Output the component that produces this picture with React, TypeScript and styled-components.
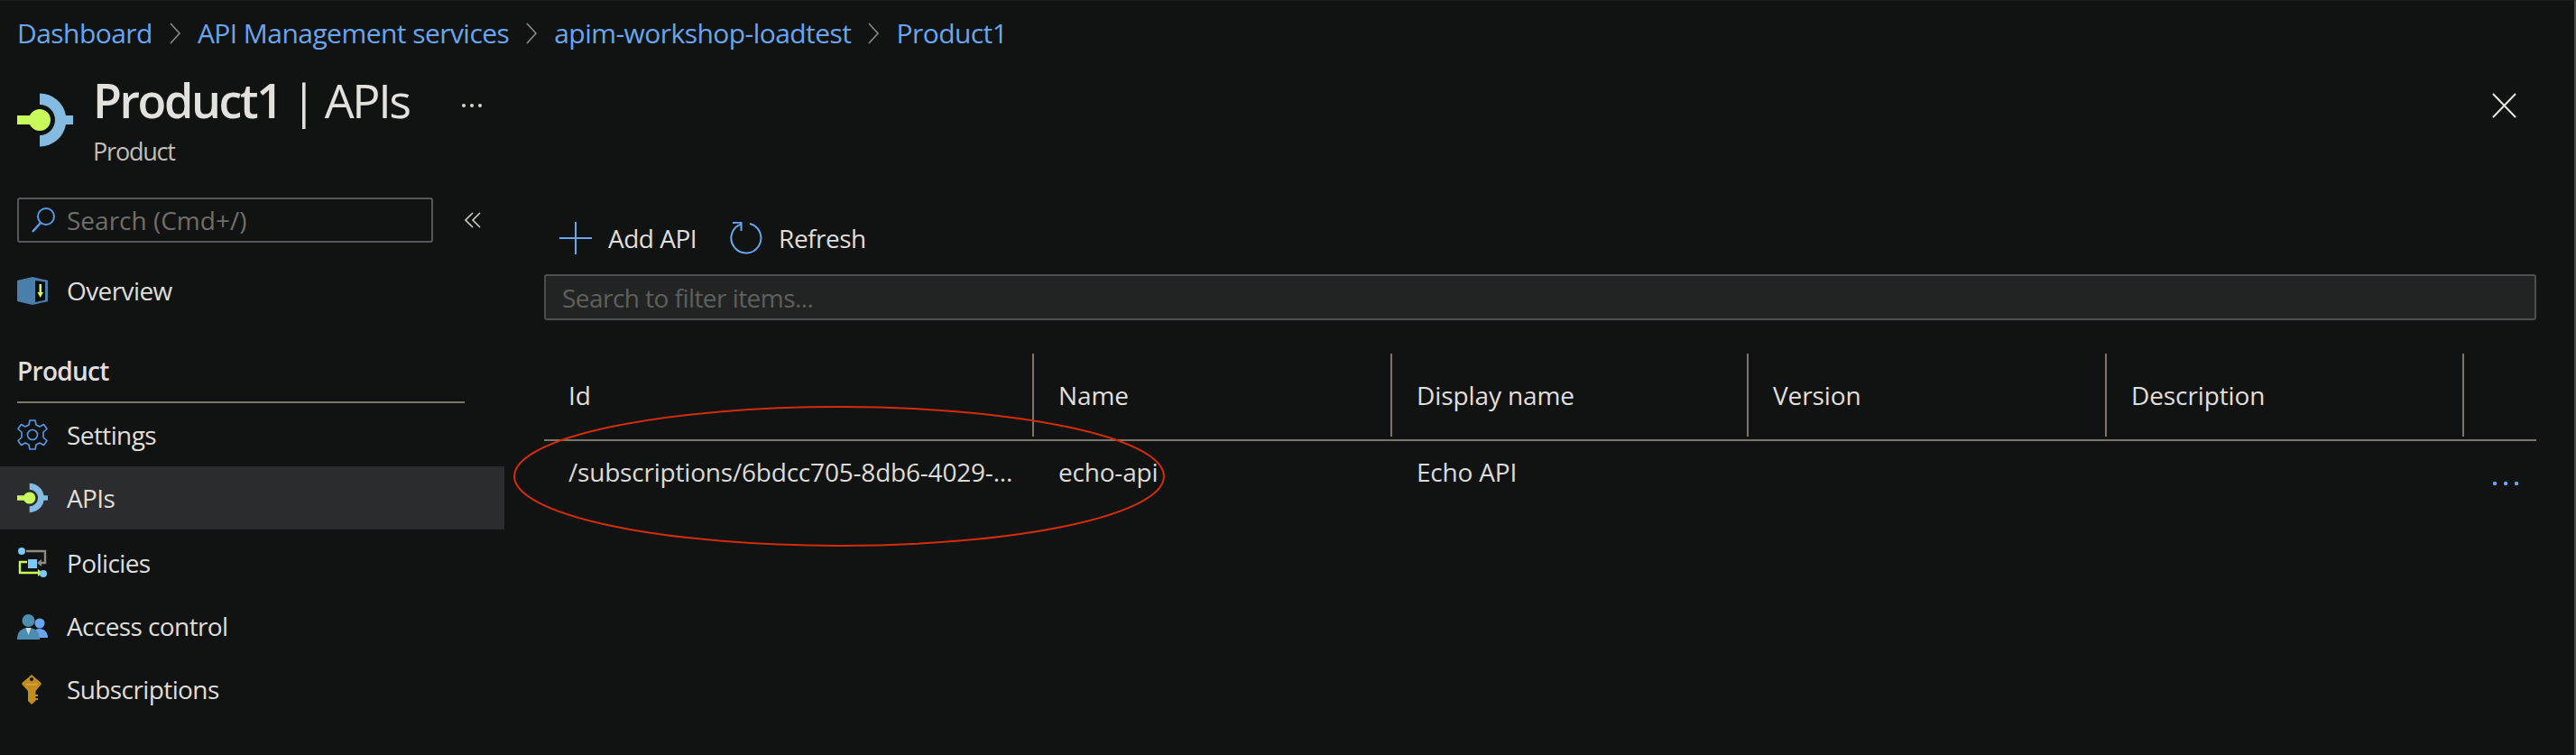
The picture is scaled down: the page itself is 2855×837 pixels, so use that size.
import React from "react";
import styled, { createGlobalStyle } from "styled-components";

const Global = createGlobalStyle`
  html, body { margin: 0; padding: 0; background: #111313; }
  * { box-sizing: border-box; }
`;

const FONT = `"Open Sans", "Noto Sans", "Liberation Sans", sans-serif`;

const Page = styled.div`
  position: relative;
  width: 2855px;
  height: 837px;
  overflow: hidden;
  background: #111313;
  color: #e0dfdc;
  font-family: ${FONT};
  border-right: 2px solid #4a4c4c;
  border-top: 1px solid #1c1e1e;
`;

const Breadcrumbs = styled.nav`
  display: flex;
  align-items: center;
  height: 60px;
  padding: 11px 0 0 19px;
  font-size: 30px;
  letter-spacing: -0.55px;
  color: #69a5f0;
`;

const Crumb = styled.span`
  white-space: nowrap;
`;

const CrumbSep = styled.svg`
  width: 14px;
  height: 24px;
  margin: 0 18px 0 18px;
  fill: none;
  stroke: #8a8a86;
  stroke-width: 1.6;
`;

const TitleBar = styled.header`
  display: flex;
  align-items: flex-start;
  height: 158px;
  padding: 15px 66px 0 19px;
`;

const TitleIcon = styled.svg`
  width: 62px;
  height: 60px;
  margin-top: 27px;
  flex: none;
`;

const TitleText = styled.div`
  display: flex;
  flex-direction: column;
  margin-left: 22px;
`;

const Title = styled.h1`
  margin: 0;
  font-size: 52px;
  line-height: 70px;
  font-weight: 400;
  letter-spacing: -2.4px;
  white-space: nowrap;
  color: #e2e1de;
`;

const TitleStrong = styled.span`
  font-weight: 600;
`;

const Subtitle = styled.div`
  font-size: 27px;
  line-height: 34px;
  margin-top: 5px;
  letter-spacing: -1.2px;
  color: #c2beb8;
`;

const More = styled.svg`
  width: 24px;
  height: 6px;
  margin: 38px 0 0 57px;
  fill: #d8d6d2;
`;

const Close = styled.svg`
  width: 27px;
  height: 28px;
  margin-left: auto;
  margin-top: 27px;
  margin-right: -2px;
  stroke: #e6e5e2;
  stroke-width: 2;
  fill: none;
`;

const Body = styled.div`
  display: flex;
`;

const Sidebar = styled.aside`
  width: 559px;
  flex: none;
`;

const SearchRow = styled.div`
  display: flex;
  align-items: center;
  padding-left: 19px;
  height: 50px;
`;

const SideSearch = styled.div`
  display: flex;
  align-items: center;
  width: 461px;
  height: 50px;
  padding-left: 13px;
  border: 2px solid #55575a;
  border-radius: 3px;
  font-size: 28px;
  color: #6f6e6a;
  white-space: nowrap;
`;

const SearchGlyph = styled.svg`
  width: 28px;
  height: 30px;
  margin-right: 12px;
  fill: none;
  stroke: #5b97e6;
  stroke-width: 2;
`;

const Collapse = styled.svg`
  width: 18px;
  height: 18px;
  margin-left: 35px;
  fill: none;
  stroke: #cfcdc9;
  stroke-width: 1.6;
`;

const NavRow = styled.div<{ $active?: boolean }>`
  display: flex;
  align-items: center;
  height: 70px;
  padding-left: 19px;
  margin-bottom: ${(p) => (p.$active ? "2px" : "0")};
  font-size: 28px;
  letter-spacing: -0.6px;
  background: ${(p) => (p.$active ? "#2b2c30" : "transparent")};
  color: #dfdedb;
`;

const NavIcon = styled.svg`
  width: 34px;
  height: 36px;
  flex: none;
  margin-right: 21px;
`;

const OverviewRow = styled(NavRow)`
  margin-top: 18px;
`;

const SectionHead = styled.div`
  margin: 19px 44px 0 19px;
  height: 71px;
  display: flex;
  align-items: center;
  font-size: 28px;
  font-weight: 600;
  letter-spacing: -0.7px;
  border-bottom: 2px solid #7c766b;
`;

const Content = styled.main`
  flex: 1;
  padding: 0 42px 0 44px;
`;

const Toolbar = styled.div`
  display: flex;
  align-items: center;
  height: 40px;
  margin-top: 25px;
  padding-left: 17px;
`;

const ToolButton = styled.div`
  display: flex;
  align-items: center;
  font-size: 28px;
  letter-spacing: -0.5px;
  margin-right: 37px;
  color: #dfdedb;
  white-space: nowrap;
`;

const ToolIcon = styled.svg`
  width: 36px;
  height: 36px;
  margin-right: 18px;
  fill: none;
  stroke: #69a5f0;
  stroke-width: 2;
`;

const FilterBox = styled.div`
  display: flex;
  align-items: center;
  height: 51px;
  margin-top: 20px;
  padding-left: 18px;
  background: #222424;
  border: 2px solid #4c4d50;
  border-radius: 3px;
  font-size: 28px;
  letter-spacing: -0.55px;
  color: #5f5f5c;
`;

const Grid = styled.div`
  display: grid;
  grid-template-columns: 543px 397px 395px 397px 396px 80px;
`;

const HeaderCell = styled.div<{ $sep?: boolean }>`
  height: 92px;
  display: flex;
  align-items: center;
  padding: 0 0 0 27px;
  margin-top: 37px;
  margin-bottom: 3px;
  font-size: 28px;
  letter-spacing: -0.1px;
  font-weight: 500;
  color: #e0dfdc;
  border-right: ${(p) => (p.$sep ? "2px solid #7c766b" : "none")};
`;

const HeaderRule = styled.div`
  grid-column: 1 / -1;
  height: 2px;
  background: #7c766b;
`;

const Cell = styled.div`
  height: 68px;
  display: flex;
  align-items: center;
  padding-left: 27px;
  font-size: 28px;
  letter-spacing: -0.2px;
  color: #dcdbd8;
  white-space: nowrap;
`;

const ActionCell = styled.div`
  height: 72px;
  display: flex;
  align-items: center;
  justify-content: flex-end;
  padding: 22px 19px 0 0;
`;

const Dots = styled.svg`
  width: 30px;
  height: 6px;
  fill: #69a5f0;
`;

const Annotation = styled.svg`
  position: absolute;
  left: 560px;
  top: 440px;
  width: 740px;
  height: 176px;
  fill: none;
  stroke: #d42c08;
  stroke-width: 2;
`;

const ApiGlyph = () => (
  <>
    <path d="M25 0.5 A29.5 29.5 0 0 1 54 25 H62 V35 H54 A29.5 29.5 0 0 1 25 59.5 V47 A17 17 0 0 0 25 13 Z" fill="#85bbe0" />
    <rect x="0" y="25" width="18" height="10" fill="#c8fb5c" />
    <circle cx="25" cy="30" r="12" fill="#c8fb5c" />
  </>
);

const ChevronSep = () => (
  <CrumbSep viewBox="0 0 14 24">
    <path d="M2 1 L12 12 L2 23" />
  </CrumbSep>
);

export default function App() {
  return (
    <Page>
      <Global />
      <Breadcrumbs>
        <Crumb>Dashboard</Crumb>
        <ChevronSep />
        <Crumb>API Management services</Crumb>
        <ChevronSep />
        <Crumb>apim-workshop-loadtest</Crumb>
        <ChevronSep />
        <Crumb>Product1</Crumb>
      </Breadcrumbs>
      <TitleBar>
        <TitleIcon viewBox="0 0 62 60">
          <ApiGlyph />
        </TitleIcon>
        <TitleText>
          <Title>
            <TitleStrong>Product1</TitleStrong> | APIs
          </Title>
          <Subtitle>Product</Subtitle>
        </TitleText>
        <More viewBox="0 0 24 6">
          <circle cx="3" cy="3" r="2" />
          <circle cx="12" cy="3" r="2" />
          <circle cx="21" cy="3" r="2" />
        </More>
        <Close viewBox="0 0 27 28">
          <path d="M1 1 L26 27 M26 1 L1 27" />
        </Close>
      </TitleBar>
      <Body>
        <Sidebar>
          <SearchRow>
            <SideSearch>
              <SearchGlyph viewBox="0 0 28 30">
                <circle cx="17" cy="11" r="9" />
                <path d="M11 18 L2 28" strokeWidth="2.6" />
              </SearchGlyph>
              Search (Cmd+/)
            </SideSearch>
            <Collapse viewBox="0 0 18 18">
              <path d="M9 1 L1 9 L9 17 M17 1 L9 9 L17 17" />
            </Collapse>
          </SearchRow>
          <OverviewRow>
            <NavIcon viewBox="0 0 34 36">
              <path d="M0 7 L17 3 L34 7 V30 L17 34 L0 30 Z" fill="#4a7fab" />
              <path d="M20 7 L34 9 V28 L20 31 Z" fill="#0a0c0c" />
              <path d="M34 7 V30 L31 30.7 V6.3 Z" fill="#4a7fab" />
              <path d="M24.5 11 H27 V20 H29 L25.7 26 L22.5 20 H24.5 Z" fill="#c8fb5c" />
            </NavIcon>
            Overview
          </OverviewRow>
          <SectionHead>Product</SectionHead>
          <NavRow>
            <NavIcon viewBox="0 0 34 36" fill="none" stroke="#5b97e6" strokeWidth="1.6">
              <path d="M14 2 H20 L21 7 L25 9 L29.5 6.5 L33 11.5 L29 15 V21 L33 24.5 L29.5 29.5 L25 27 L21 29 L20 34 H14 L13 29 L9 27 L4.5 29.5 L1 24.5 L5 21 V15 L1 11.5 L4.5 6.5 L9 9 L13 7 Z" strokeLinejoin="round" />
              <circle cx="17" cy="18" r="5.5" />
            </NavIcon>
            Settings
          </NavRow>
          <NavRow $active>
            <NavIcon viewBox="0 0 62 60">
              <ApiGlyph />
            </NavIcon>
            APIs
          </NavRow>
          <NavRow>
            <NavIcon viewBox="0 0 34 36">
              <circle cx="5" cy="5" r="4" fill="#7cc8f7" />
              <path d="M10 5 H31 V18 H24" fill="none" stroke="#8f8a84" strokeWidth="2.4" />
              <path d="M27 14 L22 18 L27 22 Z" fill="#8f8a84" />
              <rect x="12" y="14" width="10" height="10" fill="#7cc8f7" />
              <path d="M11 17 H3 V29 H25" fill="none" stroke="#c8fb5c" strokeWidth="2.4" />
              <path d="M23 25 L28 29 L23 33 Z" fill="#c8fb5c" />
              <circle cx="29" cy="30" r="4" fill="#7cc8f7" />
            </NavIcon>
            Policies
          </NavRow>
          <NavRow>
            <NavIcon viewBox="0 0 34 36">
              <circle cx="25" cy="15" r="5.5" fill="#69a5f0" />
              <path d="M17 31 C17 24 20 21 25 21 C30 21 34 25 34 31 Z" fill="#69a5f0" />
              <circle cx="12.5" cy="12" r="7" fill="#4d8db0" />
              <path d="M0 33 C0 25 4 20 12.5 20 C21 20 25 25 25 33 Z" fill="#4d8db0" />
              <path d="M9.5 20 H15.5 L12.5 28 Z" fill="#d6dadc" />
            </NavIcon>
            Access control
          </NavRow>
          <NavRow>
            <NavIcon viewBox="0 0 34 36">
              <path d="M16 2 L26 10.5 Q27.5 12 26 13.5 L20.5 20 V31 L16 35 L12 31 V20 L6 13.5 Q4.5 12 6 10.5 Z" fill="#c08d1e" />
              <circle cx="16" cy="7" r="2" fill="#111313" />
              <rect x="10" y="12" width="12" height="1.5" fill="#dca83a" />
              <rect x="20" y="24" width="3" height="2" fill="#c08d1e" />
              <rect x="20" y="28" width="3" height="2" fill="#c08d1e" />
            </NavIcon>
            Subscriptions
          </NavRow>
        </Sidebar>
        <Content>
          <Toolbar>
            <ToolButton>
              <ToolIcon viewBox="0 0 36 36">
                <path d="M18 0 V36 M0 18 H36" />
              </ToolIcon>
              Add API
            </ToolButton>
            <ToolButton>
              <ToolIcon viewBox="0 0 36 36">
                <path d="M12.5 2.4 A16.5 16.5 0 1 0 22 2" />
                <path d="M3 1 L12.5 0.6 V10" />
              </ToolIcon>
              Refresh
            </ToolButton>
          </Toolbar>
          <FilterBox>Search to filter items...</FilterBox>
          <Grid>
            <HeaderCell $sep>Id</HeaderCell>
            <HeaderCell $sep>Name</HeaderCell>
            <HeaderCell $sep>Display name</HeaderCell>
            <HeaderCell $sep>Version</HeaderCell>
            <HeaderCell $sep>Description</HeaderCell>
            <HeaderCell />
            <HeaderRule />
            <Cell>/subscriptions/6bdcc705-8db6-4029-...</Cell>
            <Cell>echo-api</Cell>
            <Cell>Echo API</Cell>
            <Cell />
            <Cell />
            <ActionCell>
              <Dots viewBox="0 0 30 6">
                <circle cx="3" cy="3" r="2.2" />
                <circle cx="15" cy="3" r="2.2" />
                <circle cx="27" cy="3" r="2.2" />
              </Dots>
            </ActionCell>
          </Grid>
        </Content>
      </Body>
      <Annotation viewBox="0 0 740 176">
        <ellipse cx="370" cy="87" rx="360" ry="77" />
      </Annotation>
    </Page>
  );
}
